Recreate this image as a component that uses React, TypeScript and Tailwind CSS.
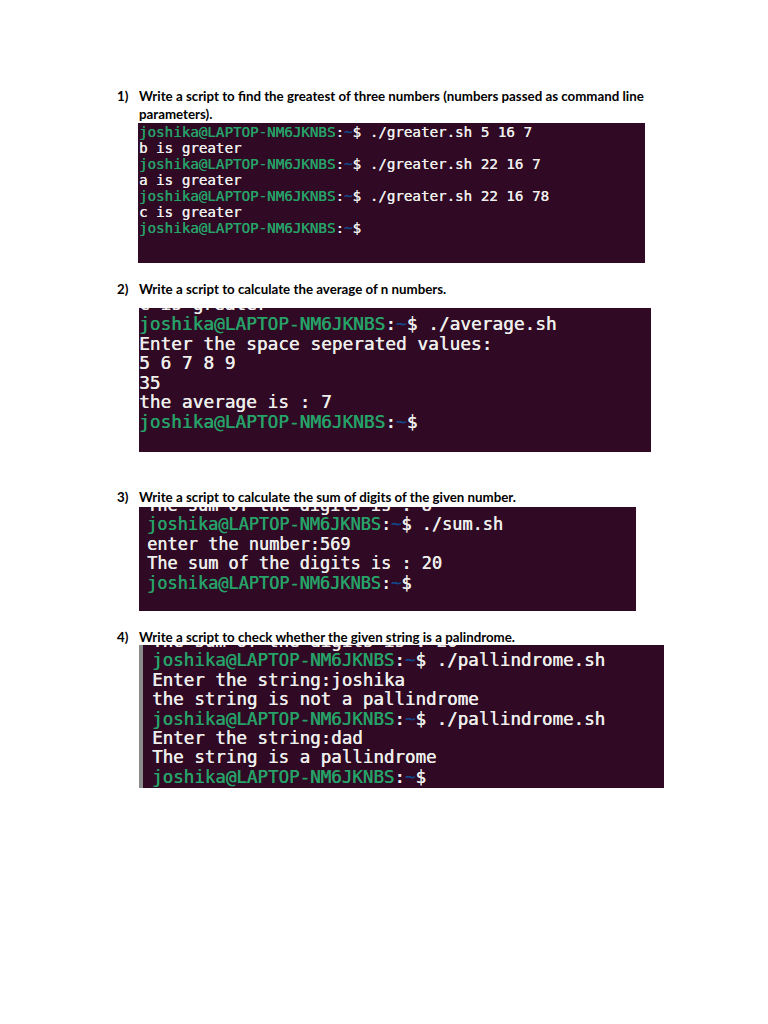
import type { ReactNode } from 'react'

type Line = { prompt?: boolean; text: string }

const mono = "font-['DejaVu_Sans_Mono','Liberation_Mono',monospace]"

function Prompt() {
  return (
    <>
      <span className="text-[#26a269]">joshika@LAPTOP-NM6JKNBS</span>
      <span className="text-[#eeeeec]">:</span>
      <span className="text-[#12488b]">~</span>
      <span className="text-[#eeeeec]">$</span>
    </>
  )
}

function TermLines({ lines }: { lines: Line[] }) {
  return (
    <>
      {lines.map((l, i) => (
        <div key={i} className="whitespace-pre">
          {l.prompt && <Prompt />}
          {l.text}
        </div>
      ))}
    </>
  )
}

function Question({ n, children }: { n: string; children: ReactNode }) {
  return (
    <div className="flex text-[13.3px] leading-[18px] font-bold text-black font-['Lato','Open_Sans',sans-serif]">
      <span className="w-[22px] shrink-0">{n}</span>
      <div>{children}</div>
    </div>
  )
}

export default function App() {
  return (
    <div className="min-h-[1024px] w-[768px] bg-white pt-[87px] pl-[117px]">
      <Question n="1)">
        <div className="whitespace-nowrap">
          Write a script to find the greatest of three numbers (numbers passed as command line
        </div>
        <div>parameters).</div>
      </Question>
      <div
        className={`ml-[21px] w-[507px] h-[140px] bg-[#300a24] text-[#eeeeec] text-[14.2px] leading-[16px] pt-px pl-px overflow-hidden [text-shadow:0.25px_0_0_currentColor] ${mono}`}
      >
        <TermLines
          lines={[
            { prompt: true, text: ' ./greater.sh 5 16 7' },
            { text: 'b is greater' },
            { prompt: true, text: ' ./greater.sh 22 16 7' },
            { text: 'a is greater' },
            { prompt: true, text: ' ./greater.sh 22 16 78' },
            { text: 'c is greater' },
            { prompt: true, text: '' },
          ]}
        />
      </div>

      <div className="mt-[17px]">
        <Question n="2)">Write a script to calculate the average of n numbers.</Question>
      </div>
      <div
        className={`mt-[10px] ml-[22px] w-[512px] h-[144px] bg-[#300a24] text-[#eeeeec] text-[17.8px] leading-[19.6px] overflow-hidden [text-shadow:0.4px_0_0_currentColor] ${mono}`}
      >
        <div className="mt-[-13.6px]">
          <TermLines
            lines={[
              { text: 'c is greater' },
              { prompt: true, text: ' ./average.sh' },
              { text: 'Enter the space seperated values:' },
              { text: '5 6 7 8 9' },
              { text: '35' },
              { text: 'the average is : 7' },
              { prompt: true, text: '' },
            ]}
          />
        </div>
      </div>

      <div className="mt-[36px]">
        <Question n="3)">Write a script to calculate the sum of digits of the given number.</Question>
      </div>
      <div
        className={`mt-px ml-[22px] w-[497px] h-[104px] bg-[#300a24] text-[#eeeeec] text-[16.9px] leading-[19.6px] pl-[8px] overflow-hidden [text-shadow:0.4px_0_0_currentColor] ${mono}`}
      >
        <div className="mt-[-11.4px]">
          <TermLines
            lines={[
              { text: 'The sum of the digits is : 8' },
              { prompt: true, text: ' ./sum.sh' },
              { text: 'enter the number:569' },
              { text: 'The sum of the digits is : 20' },
              { prompt: true, text: '' },
            ]}
          />
        </div>
      </div>

      <div className="mt-[17px]">
        <Question n="4)">Write a script to check whether the given string is a palindrome.</Question>
      </div>
      <div
        className={`mt-[-1px] ml-[22px] w-[525px] h-[143px] bg-[#300a24] text-[#eeeeec] text-[17.5px] leading-[19.4px] flex overflow-hidden [text-shadow:0.4px_0_0_currentColor] ${mono}`}
      >
        <div className="w-[4px] shrink-0 bg-[#8c8c8c]" />
        <div className="pl-[9px] mt-[-13.1px]">
          <TermLines
            lines={[
              { text: 'The sum of the digits is : 20' },
              { prompt: true, text: ' ./pallindrome.sh' },
              { text: 'Enter the string:joshika' },
              { text: 'the string is not a pallindrome' },
              { prompt: true, text: ' ./pallindrome.sh' },
              { text: 'Enter the string:dad' },
              { text: 'The string is a pallindrome' },
              { prompt: true, text: '' },
            ]}
          />
        </div>
      </div>
    </div>
  )
}
